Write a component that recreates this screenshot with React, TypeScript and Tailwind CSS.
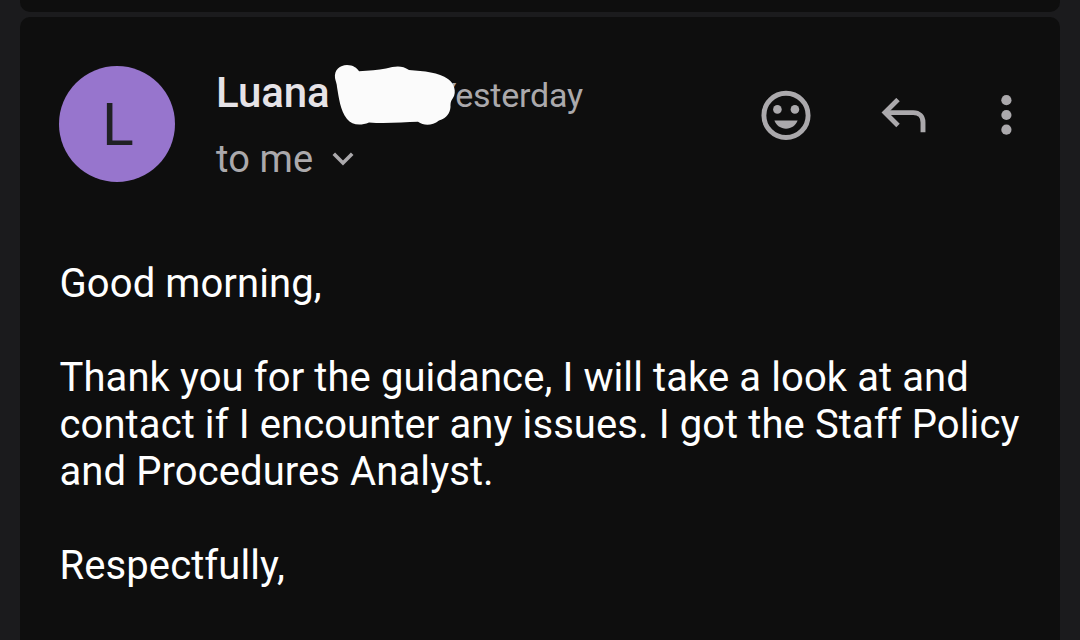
function MoodIcon() {
  return (
    <svg width="50" height="50" viewBox="0 0 50 50" fill="none" className="shrink-0">
      <circle cx="25" cy="25.4" r="22.1" stroke="#aba9ac" strokeWidth="4.9" />
      <circle cx="16.4" cy="19.4" r="4.3" fill="#aba9ac" />
      <circle cx="33.9" cy="19.4" r="4.3" fill="#aba9ac" />
      <path d="M13.4 30.600H36.6C34.9 35.500 30.3 38.700 25 38.700S15.1 35.500 13.4 30.600Z" fill="#aba9ac" />
    </svg>
  );
}

function ReplyIcon() {
  return (
    <svg width="46" height="36" viewBox="0 0 46 36" fill="none" stroke="#aba9ac" strokeWidth="4.9" className="shrink-0">
      <path d="M17 1.6L4 14.6L17 27.600" />
      <path d="M4.5 14.6H32.2C38.2 14.6 42 18.5 42 24.4V34.2" />
    </svg>
  );
}

function MoreIcon() {
  return (
    <svg width="12" height="42" viewBox="0 0 12 42" fill="#aba9ac" className="shrink-0">
      <circle cx="6.4" cy="6.200" r="5.1" />
      <circle cx="6.4" cy="21" r="5.1" />
      <circle cx="6.4" cy="35.7" r="5.1" />
    </svg>
  );
}

function Redaction() {
  return (
    <svg width="124" height="62" viewBox="0 0 124 62" className="absolute left-[117px] -top-[2px]">
      <path
        d="M2 14C1 6 7 1 14 1C20 1 24 4 26 7.300C36 6.500 45 6 53 4.500C62 2 69 1 76 6C91 7 106 8.500 115 15C121 19 124 28 120 34C118 37 117.500 38 117.500 43C117 49 114 54 106 56.500C99 62 91 62 85 57.800C70 58 54 60 36 58.500C27 62 19 61 14 55C7 46 6 34 4 23C4 20 2.500 17 2 14Z"
        fill="#fbfbfb"
      />
    </svg>
  );
}

export default function App() {
  return (
    <div className="flex h-[640px] w-[1080px] flex-col gap-[5px] overflow-hidden bg-[#1b1b1d] px-5 font-['Roboto',sans-serif]">
      <div className="h-3 shrink-0 rounded-b-[10px] bg-[#0e0e0e]" />
      <main className="flex-1 rounded-t-[10px] bg-[#0e0e0e] pl-[39px]">
        <header className="flex h-[222px] items-start pt-[49px]">
          <div className="flex h-[116px] w-[116px] shrink-0 items-center justify-center rounded-full bg-[#9775cd] text-[59px] leading-none text-[#202124]">
            <span className="pl-[2px] pt-px">L</span>
          </div>
          <div className="relative ml-[41px] w-[545px]">
            <div className="flex h-[53px] items-baseline whitespace-nowrap leading-[53px]">
              <span className="w-[220px] text-[42px] font-medium tracking-[-0.1px] text-[#e6e3e7]">Luana</span>
              <span className="text-[34px] tracking-[-0.2px] text-[#aba9ac]">Yesterday</span>
            </div>
            <Redaction />
            <div className="mt-[16px] flex h-[48px] items-center gap-[19px]">
              <span className="text-[38px] leading-[48px] tracking-[0.1px] text-[#aba9ac]">to me</span>
              <svg width="22" height="16" viewBox="0 0 22 16" fill="none" stroke="#aba9ac" strokeWidth="3.6">
                <path d="M1.800 2.700L11 11.900L20.200 2.700" />
              </svg>
            </div>
          </div>
          <div className="flex pt-[24px]">
            <MoodIcon />
            <div className="ml-[70px] mt-[8px]"><ReplyIcon /></div>
            <div className="ml-[73px] mt-[4px]"><MoreIcon /></div>
          </div>
        </header>
        <div className="pl-[0.5px] pt-[21px] text-[40px] leading-[47px] tracking-[0.09px] whitespace-nowrap text-white">
          <p>Good morning,</p>
          <p className="mt-[47px]">
            Thank you for the guidance, I will take a look at and<br />
            contact if I encounter any issues. I got the Staff Policy<br />
            and Procedures Analyst.
          </p>
          <p className="mt-[47px]">Respectfully,</p>
        </div>
      </main>
    </div>
  );
}
